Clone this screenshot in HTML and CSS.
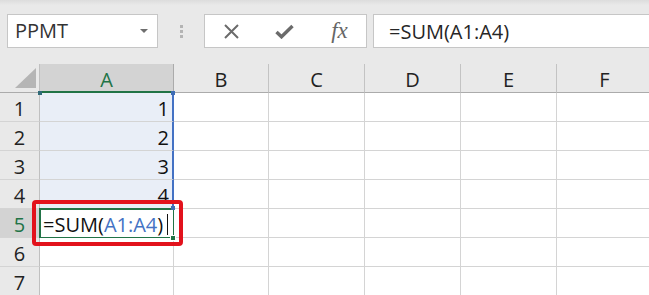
FILE: index.html
```html
<!DOCTYPE html>
<html>
<head>
<meta charset="utf-8">
<link rel="stylesheet" href="styles.css">
</head>
<body>
<div class="app">
  <div class="toolbar">
    <div class="namebox"><span class="name">PPMT</span><span class="caret"></span></div>
    <div class="grip"><i></i><i></i><i></i></div>
    <div class="fbtns">
      <span class="fbtn"><svg width="15" height="15" viewBox="0 0 15 15"><path d="M1 1L14 14M14 1L1 14" stroke="#6b6b6b" stroke-width="2" fill="none"/></svg></span>
      <span class="fbtn"><svg width="19" height="15" viewBox="0 0 19 15"><path d="M1.5 8L6.5 12.8L17.5 2" stroke="#6b6b6b" stroke-width="3.4" fill="none"/></svg></span>
      <span class="fbtn fx">fx</span>
    </div>
    <div class="finput">=SUM(A1:A4)</div>
  </div>
  <div class="sheet">
    <div class="grid">
      <div class="corner"><span class="tri"></span></div>
      <div class="ch active">A</div><div class="ch">B</div><div class="ch">C</div><div class="ch">D</div><div class="ch">E</div><div class="ch">F</div>

      <div class="rh">1</div><div class="cell sel">1</div><div class="cell"></div><div class="cell"></div><div class="cell"></div><div class="cell"></div><div class="cell"></div>
      <div class="rh">2</div><div class="cell sel">2</div><div class="cell"></div><div class="cell"></div><div class="cell"></div><div class="cell"></div><div class="cell"></div>
      <div class="rh">3</div><div class="cell sel">3</div><div class="cell"></div><div class="cell"></div><div class="cell"></div><div class="cell"></div><div class="cell"></div>
      <div class="rh">4</div><div class="cell sel">4</div><div class="cell"></div><div class="cell"></div><div class="cell"></div><div class="cell"></div><div class="cell"></div>
      <div class="rh active">5</div><div class="cell edit">=SUM(<span class="ref">A1:A4</span>)<span class="cursor"></span></div><div class="cell"></div><div class="cell"></div><div class="cell"></div><div class="cell"></div><div class="cell"></div>
      <div class="rh">6</div><div class="cell"></div><div class="cell"></div><div class="cell"></div><div class="cell"></div><div class="cell"></div><div class="cell"></div>
      <div class="rh">7</div><div class="cell"></div><div class="cell"></div><div class="cell"></div><div class="cell"></div><div class="cell"></div><div class="cell"></div>
    </div>
    <span class="handle hb tl"></span>
    <span class="handle hb tr"></span>
    <span class="handle hb br"></span>
    <span class="handle hg"></span>
    <div class="callout"></div>
  </div>
</div>
</body>
</html>
```

FILE: styles.css
```css
html, body {
  margin: 0;
  padding: 0;
}
body {
  width: 649px;
  height: 295px;
  overflow: hidden;
  background: #e9e9e9;
  font-family: "Open Sans", "Noto Sans", sans-serif;
}
.app {
  width: 649px;
  height: 295px;
  overflow: hidden;
}
.toolbar {
  display: flex;
  align-items: stretch;
  height: 64px;
  box-sizing: border-box;
  padding: 14px 0 16px 7px;
  background: linear-gradient(#dcdcdc 0, #e9e9e9 5px, #e9e9e9 100%);
}
.namebox {
  width: 151px;
  box-sizing: border-box;
  background: #fff;
  border: 1px solid #c6c6c6;
  display: flex;
  align-items: center;
  justify-content: space-between;
  padding: 0 9px 0 7px;
}
.name {
  font-size: 20px;
  color: #333;
  line-height: 1;
}
.caret {
  width: 0;
  height: 0;
  border-left: 4px solid transparent;
  border-right: 4px solid transparent;
  border-top: 4px solid #6e6e6e;
}
.grip {
  width: 46px;
  display: flex;
  flex-direction: column;
  align-items: center;
  justify-content: center;
  gap: 2px;
}
.grip i {
  display: block;
  width: 3px;
  height: 3px;
  background: #b4b4b4;
}
.fbtns {
  width: 163px;
  box-sizing: border-box;
  background: #fff;
  border: 1px solid #c6c6c6;
  display: flex;
  align-items: center;
}
.fbtn {
  width: 54px;
  display: flex;
  align-items: center;
  justify-content: center;
}
.fbtn.fx {
  font-family: "Liberation Serif", "DejaVu Serif", serif;
  font-style: italic;
  font-size: 23px;
  color: #666;
  padding-left: 2px;
}
.finput {
  flex: 1;
  margin-left: 6px;
  margin-right: -4px;
  background: #fff;
  border: 1px solid #c6c6c6;
  display: flex;
  align-items: center;
  padding-left: 15px;
  font-size: 20px;
  color: #262626;
}
.sheet {
  position: relative;
  height: 231px;
}
.grid {
  display: grid;
  grid-template-columns: 40px 134px 95px 96px 96px 96px 96px;
  grid-template-rows: repeat(8, 29px);
  font-size: 20px;
}
.grid > div {
  box-sizing: border-box;
  display: flex;
  align-items: center;
  padding-top: 3px;
  color: #222;
}
.corner {
  background: #e9e9e9;
  border-right: 1px solid #c0c0c0;
  border-bottom: 1px solid #ababab;
  position: relative;
  align-items: flex-start !important;
  padding: 4px 0 0 15px !important;
}
.tri {
  display: block;
  width: 21px;
  height: 20px;
  background: #b5b5b5;
  clip-path: polygon(100% 0, 100% 100%, 0 100%);
}
.ch {
  background: #e9e9e9;
  border-right: 1px solid #c3c3c3;
  border-bottom: 1px solid #ababab;
  justify-content: center;
}
.ch.active {
  background: #d3d3d3;
  color: #217346 !important;
  border-bottom: 2px solid #217346;
  border-right-color: #ababab;
}
.rh {
  background: #e9e9e9;
  border-right: 1px solid #c0c0c0;
  border-bottom: 1px solid #d4d4d4;
  justify-content: center;
}
.rh.active {
  background: #d3d3d3;
  color: #217346 !important;
}
.cell {
  background: #fff;
  border-right: 1px solid #d4d4d4;
  border-bottom: 1px solid #d4d4d4;
}
.cell.sel {
  background: #e9eef7;
  justify-content: flex-end;
  padding-right: 3px;
  border-right: 2px solid #4472c4;
  color: #111 !important;
}
.cell.edit {
  padding-left: 3px;
  outline: 2px solid #217346;
  outline-offset: -1px;
  color: #111 !important;
  white-space: nowrap;
}
.ref {
  color: #4472c4;
}
.cursor {
  display: inline-block;
  width: 0;
  height: 21px;
  border-left: 1px solid #111;
  margin-left: 4px;
}
.handle {
  position: absolute;
  box-sizing: border-box;
}
.hb {
  width: 4px;
  height: 4px;
  background: #3e6db5;
}
.hb.tl { left: 38px; top: 27px; background: #2f6a78; }
.hb.tr { left: 171px; top: 27px; }
.hb.br { left: 171px; top: 142px; }
.hg {
  width: 6px;
  height: 6px;
  background: #217346;
  border: 1px solid #fff;
  left: 170px;
  top: 171px;
}
.callout {
  position: absolute;
  left: 32px;
  top: 136px;
  width: 151px;
  height: 46px;
  box-sizing: border-box;
  border: 4px solid #e2121c;
  border-radius: 4px;
}
```
